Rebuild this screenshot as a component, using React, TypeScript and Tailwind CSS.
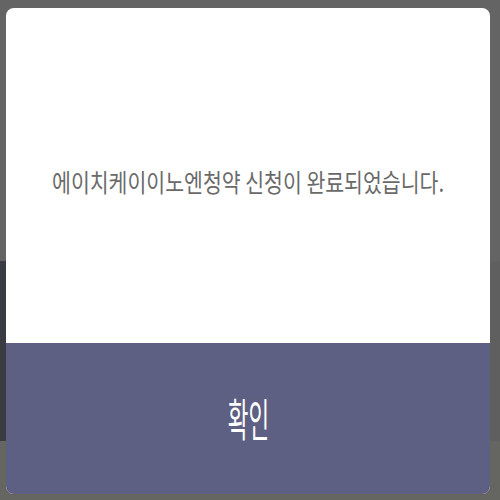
const KR = { fontFamily: '"Noto Sans CJK KR", "Noto Sans", sans-serif' };

export default function App() {
    return (
        <div className="relative w-[500px] h-[500px] overflow-hidden bg-[#636363]" style={KR}>
            <div className="flex flex-col h-full">
                <div className="h-[261px] bg-[#646464]" />
                <div className="flex h-[180px]">
                    <div className="w-[8px] bg-[#3b3c42]" />
                    <div className="flex-1 bg-[#5f5f5f]" />
                </div>
                <div className="flex-1 bg-[#656562]" />
            </div>

            <div className="absolute left-[6px] top-[8px] w-[484px] h-[486px] flex flex-col rounded-[8px] overflow-hidden bg-white">
                <div className="h-[335px] flex items-center justify-center pt-[12px]">
                    <span className="inline-block whitespace-nowrap text-[25px] leading-none text-[#6a6a6a] scale-x-[0.82]">
                        에이치케이이노엔청약 신청이 완료되었습니다.
                    </span>
                </div>
                <button className="flex-1 flex items-center justify-center bg-[#5d5f83] text-white">
                    <span className="inline-block whitespace-nowrap text-[45px] leading-none scale-x-[0.5] pb-[2px]">
                        확인
                    </span>
                </button>
            </div>
        </div>
    );
}
